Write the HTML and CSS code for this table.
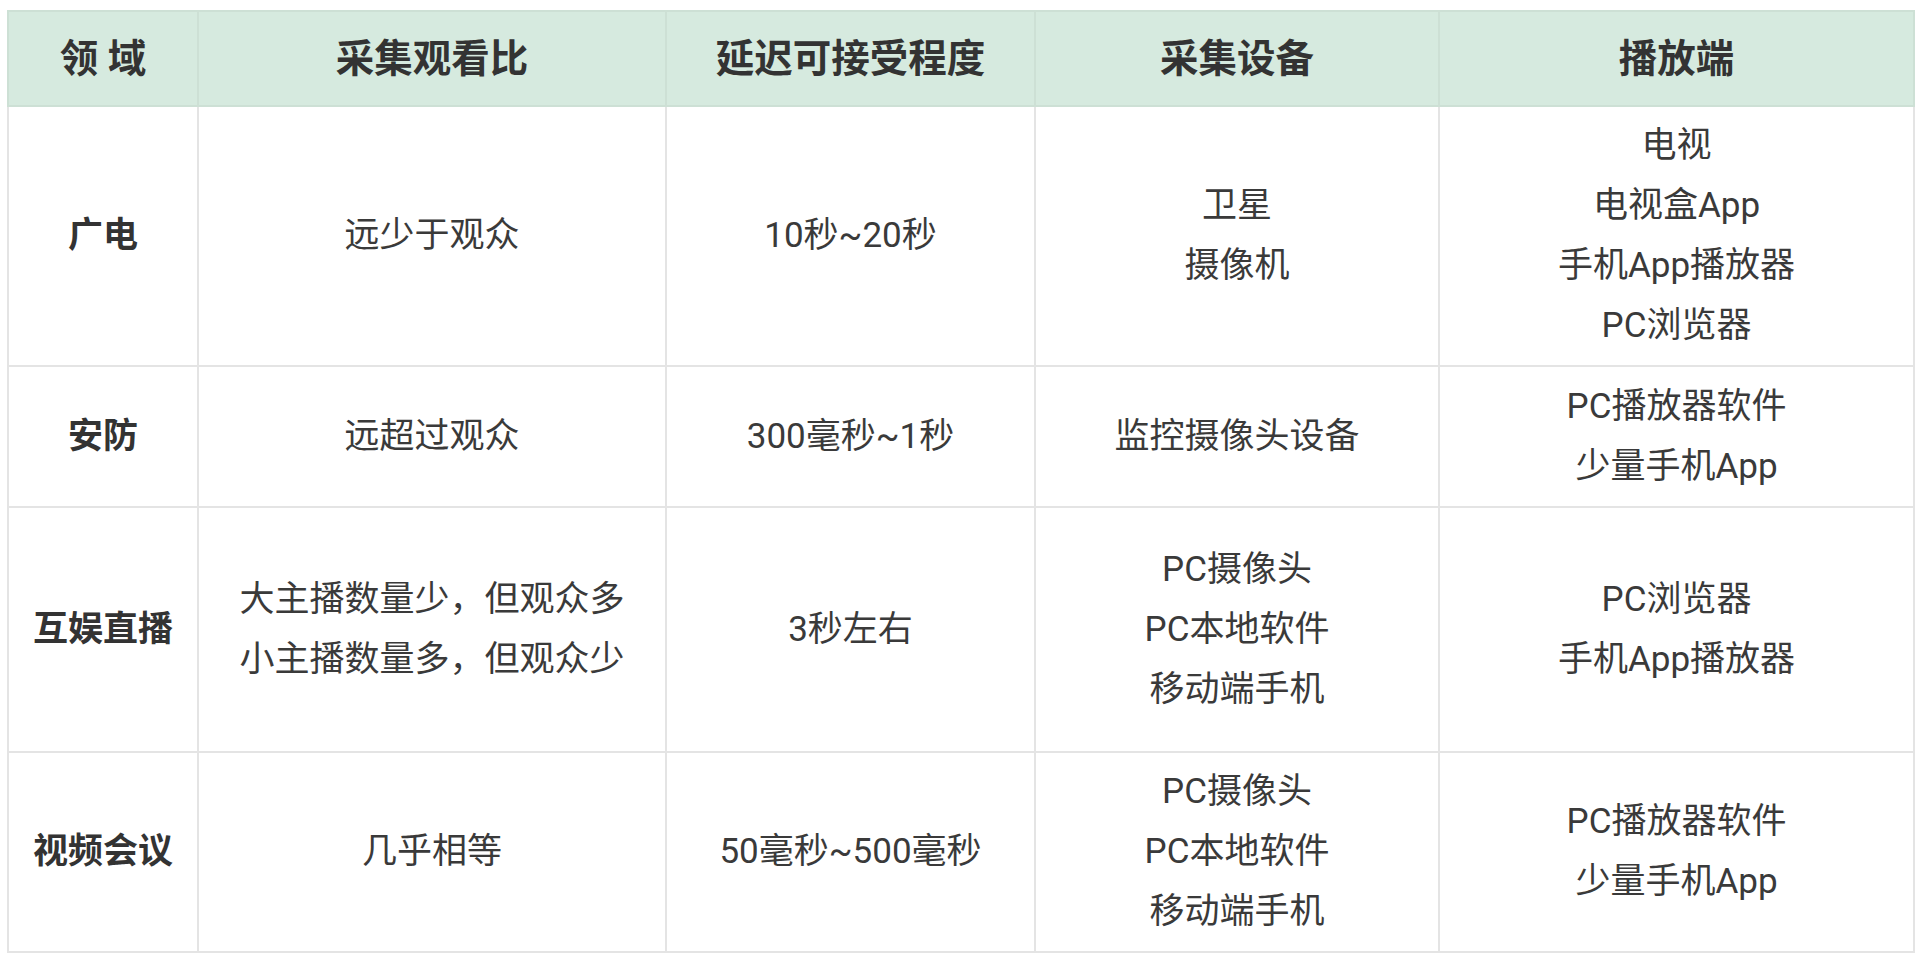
FILE: index.html
```html
<!DOCTYPE html>
<html lang="zh">
<head>
<meta charset="utf-8">
<title>直播领域对比</title>
<link rel="stylesheet" href="styles.css">
</head>
<body>
<table class="cmp">
  <colgroup>
    <col class="c1"><col class="c2"><col class="c3"><col class="c4"><col class="c5">
  </colgroup>
  <thead>
    <tr class="rh">
      <th>领 域</th>
      <th>采集观看比</th>
      <th>延迟可接受程度</th>
      <th>采集设备</th>
      <th>播放端</th>
    </tr>
  </thead>
  <tbody>
    <tr class="r1">
      <td class="k">广电</td>
      <td>远少于观众</td>
      <td>10秒~20秒</td>
      <td>卫星<br>摄像机</td>
      <td>电视<br>电视盒App<br>手机App播放器<br>PC浏览器</td>
    </tr>
    <tr class="r2">
      <td class="k">安防</td>
      <td>远超过观众</td>
      <td>300毫秒~1秒</td>
      <td>监控摄像头设备</td>
      <td>PC播放器软件<br>少量手机App</td>
    </tr>
    <tr class="r3">
      <td class="k">互娱直播</td>
      <td>大主播数量少，但观众多<br>小主播数量多，但观众少</td>
      <td>3秒左右</td>
      <td>PC摄像头<br>PC本地软件<br>移动端手机</td>
      <td>PC浏览器<br>手机App播放器</td>
    </tr>
    <tr class="r4">
      <td class="k">视频会议</td>
      <td>几乎相等</td>
      <td>50毫秒~500毫秒</td>
      <td>PC摄像头<br>PC本地软件<br>移动端手机</td>
      <td>PC播放器软件<br>少量手机App</td>
    </tr>
  </tbody>
</table>
</body>
</html>
```

FILE: styles.css
```css
html, body {
  margin: 0;
  padding: 0;
  background: #ffffff;
}
body {
  padding: 10px 0 0 7px;
  font-family: "Roboto", "Noto Sans CJK SC", sans-serif;
  color: #3a3a3a;
}
.cmp {
  border-collapse: collapse;
  table-layout: fixed;
  width: 1906px;
  font-size: 35px;
  line-height: 60px;
}
.c1 { width: 190px; }
.c2 { width: 468px; }
.c3 { width: 369px; }
.c4 { width: 404px; }
.c5 { width: 475px; }
.cmp th, .cmp td {
  border: 2px solid #e4e4e4;
  text-align: center;
  vertical-align: middle;
  padding: 0;
}
.cmp th {
  background: #d6eadf;
  border-color: #cde0d5;
  font-size: 38.5px;
  font-weight: 700;
  color: #333333;
}
.cmp td.k {
  font-weight: 700;
  color: #333333;
}
.rh { height: 95px; }
.r1 { height: 260px; }
.r2 { height: 141px; }
.r3 { height: 245px; }
.r4 { height: 200px; }
```
